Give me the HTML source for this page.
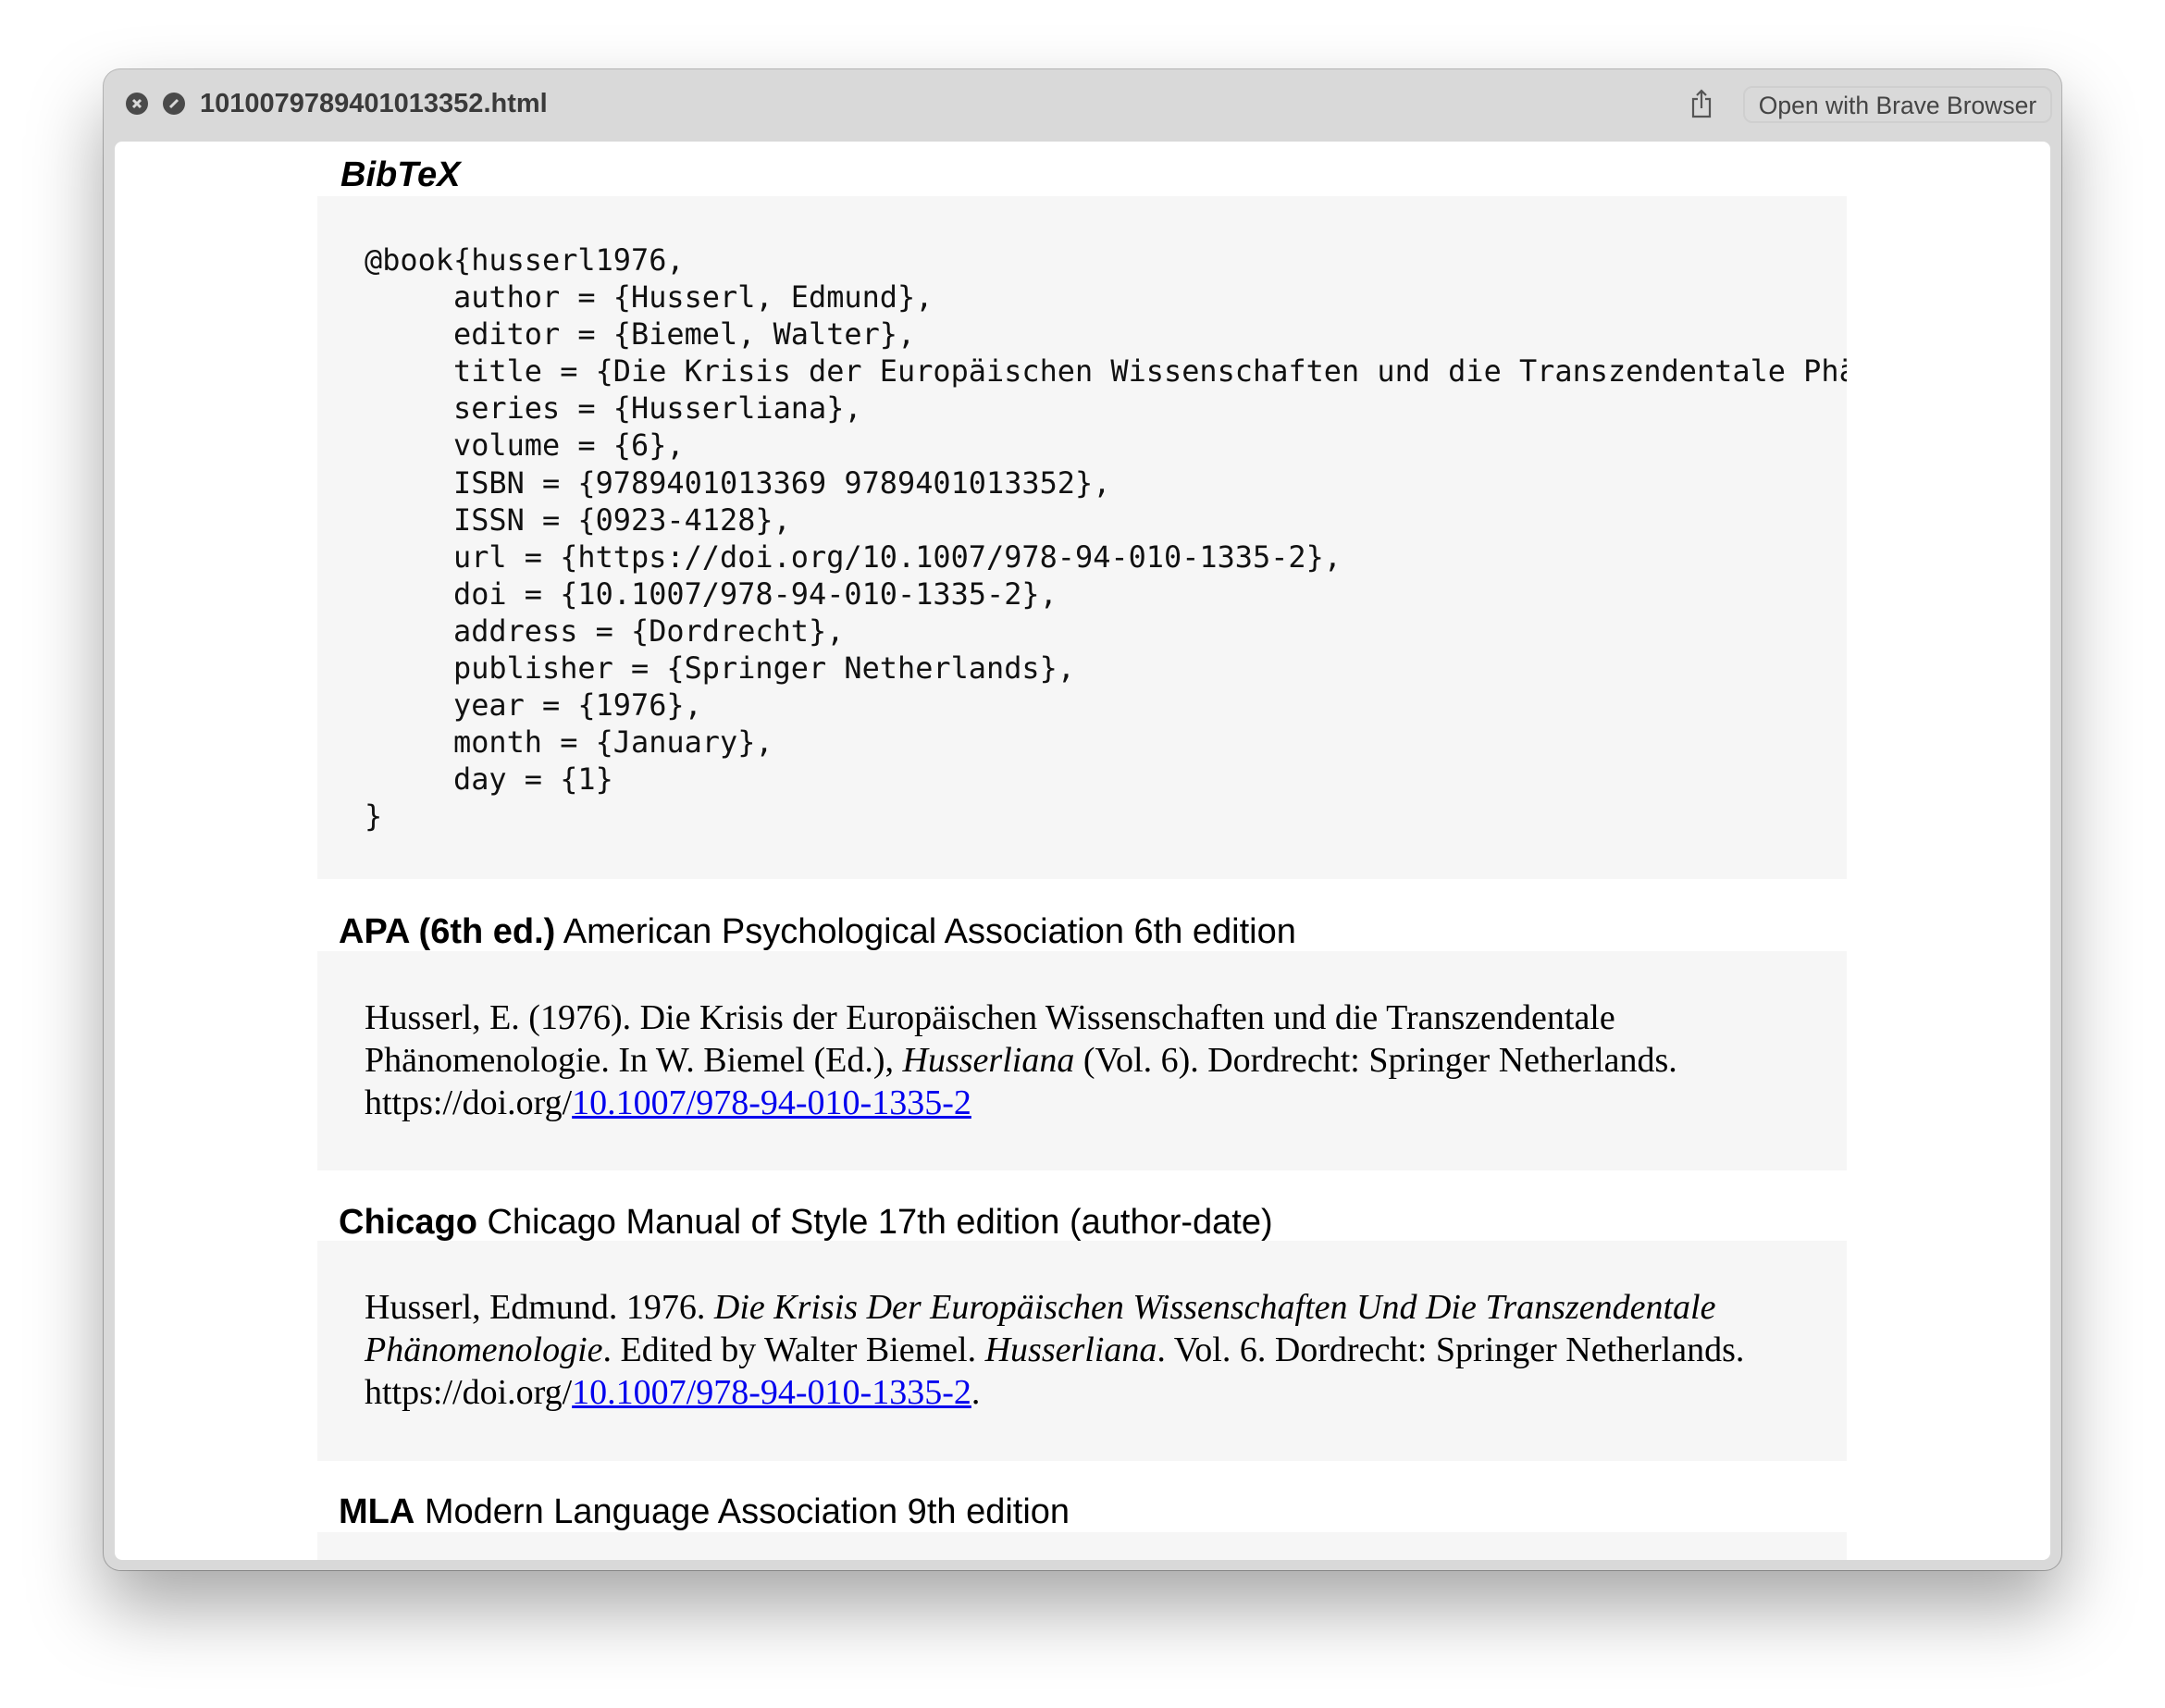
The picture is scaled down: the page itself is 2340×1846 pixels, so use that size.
<!DOCTYPE html>
<html><head><meta charset="utf-8"><style>
html,body{margin:0;padding:0;width:2340px;height:1846px;overflow:hidden;background:#fff;}
.win{position:absolute;left:112px;top:75px;width:2116px;height:1622px;border-radius:18px;background:#d9d9d9;box-shadow:0 40px 80px rgba(0,0,0,0.35),0 0 0 1px #bdbdbd;overflow:hidden;}
.content{position:absolute;left:12px;top:78px;width:2092px;height:1533px;background:#fff;border-radius:8px;overflow:hidden;}
.title{position:absolute;left:104px;top:19px;font:bold 29px "Liberation Sans",sans-serif;color:#3a3a3a;line-height:36px;}
.ic{position:absolute;top:25px;width:24px;height:24px;border-radius:50%;background:#4a4a4a;}
.btn{position:absolute;left:1772px;top:18px;width:334px;height:40px;border:2px solid #cfcfcf;border-radius:10px;font:26.5px "Liberation Sans",sans-serif;color:#444;text-align:center;line-height:38px;box-sizing:border-box;}
h3{position:absolute;margin:0;font:38px "Liberation Sans",sans-serif;line-height:44px;color:#000;white-space:nowrap;z-index:2;}
.box{position:absolute;left:219px;width:1653px;background:#f6f6f6;}
pre{position:absolute;margin:0;left:270px;top:108px;font:31.9px "DejaVu Sans Mono",monospace;line-height:40.1px;color:#111;white-space:pre;}
.ser{position:absolute;left:270px;font:38px "Liberation Serif",serif;line-height:46px;color:#000;white-space:nowrap;}
a{color:#0000ee;text-decoration:underline;}
</style></head><body>
<div class="win">
  <div class="ic" style="left:24px"><svg width="24" height="24"><path d="M8 8L16 16M16 8L8 16" stroke="#d9d9d9" stroke-width="3"/></svg></div>
  <div class="ic" style="left:64px"><svg width="24" height="24"><path d="M8 16L16 8" stroke="#d9d9d9" stroke-width="3"/></svg></div>
  <div class="title">1010079789401013352.html</div>
  <svg style="position:absolute;left:1714px;top:20px" width="26" height="34"><path d="M9 12H4V31H22V12H17M13 22V3M8 8L13 3L18 8" stroke="#555" stroke-width="2.2" fill="none"/></svg>
  <div class="btn">Open with Brave Browser</div>
  <div class="content">
    <div class="box" style="top:59px;height:738px;"></div>
    <h3 style="left:244px;top:14px;font-weight:bold;font-style:italic;">BibTeX</h3>
<pre>@book{husserl1976,
     author = {Husserl, Edmund},
     editor = {Biemel, Walter},
     title = {Die Krisis der Europäischen Wissenschaften und die Transzendentale Phänomenologie},
     series = {Husserliana},
     volume = {6},
     ISBN = {9789401013369 9789401013352},
     ISSN = {0923-4128},
     url = {https://doi.org/10.1007/978-94-010-1335-2},
     doi = {10.1007/978-94-010-1335-2},
     address = {Dordrecht},
     publisher = {Springer Netherlands},
     year = {1976},
     month = {January},
     day = {1}
}</pre>
    <div style="position:absolute;left:1872px;top:59px;width:300px;height:738px;background:#fff"></div>
    <div class="box" style="top:875px;height:237px;"></div>
    <h3 style="left:242px;top:832px;"><b>APA (6th ed.)</b> American Psychological Association 6th edition</h3>
    <div class="ser" style="top:924px;">Husserl, E. (1976). Die Krisis der Europäischen Wissenschaften und die Transzendentale<br>Phänomenologie. In W. Biemel (Ed.), <i>Husserliana</i> (Vol. 6). Dordrecht: Springer Netherlands.<br>https://doi.org/<a>10.1007/978-94-010-1335-2</a></div>
    <div class="box" style="top:1188px;height:238px;"></div>
    <h3 style="left:242px;top:1146px;"><b>Chicago</b> Chicago Manual of Style 17th edition (author-date)</h3>
    <div class="ser" style="top:1237px;">Husserl, Edmund. 1976. <i>Die Krisis Der Europäischen Wissenschaften Und Die Transzendentale<br>Phänomenologie</i>. Edited by Walter Biemel. <i>Husserliana</i>. Vol. 6. Dordrecht: Springer Netherlands.<br>https://doi.org/<a>10.1007/978-94-010-1335-2</a>.</div>
    <div class="box" style="top:1503px;height:100px;"></div>
    <h3 style="left:242px;top:1459px;"><b>MLA</b> Modern Language Association 9th edition</h3>
  </div>
</div>
</body></html>
